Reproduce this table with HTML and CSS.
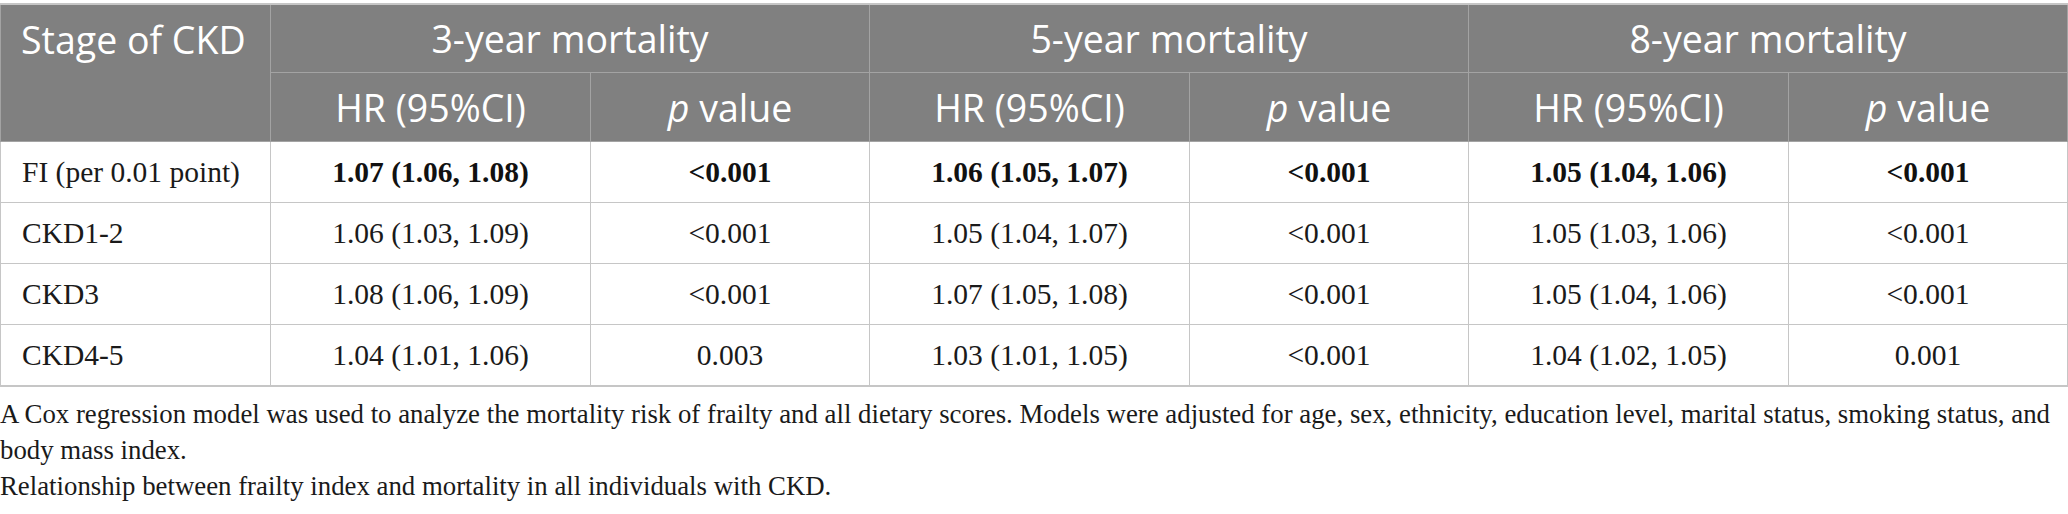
FILE: index.html
```html
<!DOCTYPE html>
<html lang="en">
<head>
<meta charset="utf-8">
<title>Frailty index and mortality in CKD</title>
<link rel="stylesheet" href="styles.css">
</head>
<body>
<div class="page">
  <table class="data">
    <colgroup>
      <col class="c-stage">
      <col class="c-hr"><col class="c-p">
      <col class="c-hr"><col class="c-p">
      <col class="c-hr"><col class="c-p">
    </colgroup>
    <thead>
      <tr class="h1">
        <th rowspan="2" class="stage">Stage of CKD</th>
        <th colspan="2">3-year mortality</th>
        <th colspan="2">5-year mortality</th>
        <th colspan="2">8-year mortality</th>
      </tr>
      <tr class="h2">
        <th>HR (95%CI)</th><th><i>p</i> value</th>
        <th>HR (95%CI)</th><th><i>p</i> value</th>
        <th>HR (95%CI)</th><th><i>p</i> value</th>
      </tr>
    </thead>
    <tbody>
      <tr>
        <td class="label">FI (per 0.01 point)</td>
        <td><b>1.07 (1.06, 1.08)</b></td><td><b>&lt;0.001</b></td>
        <td><b>1.06 (1.05, 1.07)</b></td><td><b>&lt;0.001</b></td>
        <td><b>1.05 (1.04, 1.06)</b></td><td><b>&lt;0.001</b></td>
      </tr>
      <tr>
        <td class="label">CKD1-2</td>
        <td>1.06 (1.03, 1.09)</td><td>&lt;0.001</td>
        <td>1.05 (1.04, 1.07)</td><td>&lt;0.001</td>
        <td>1.05 (1.03, 1.06)</td><td>&lt;0.001</td>
      </tr>
      <tr>
        <td class="label">CKD3</td>
        <td>1.08 (1.06, 1.09)</td><td>&lt;0.001</td>
        <td>1.07 (1.05, 1.08)</td><td>&lt;0.001</td>
        <td>1.05 (1.04, 1.06)</td><td>&lt;0.001</td>
      </tr>
      <tr>
        <td class="label">CKD4-5</td>
        <td>1.04 (1.01, 1.06)</td><td>0.003</td>
        <td>1.03 (1.01, 1.05)</td><td>&lt;0.001</td>
        <td>1.04 (1.02, 1.05)</td><td>0.001</td>
      </tr>
    </tbody>
  </table>
  <div class="notes">
    <p>A Cox regression model was used to analyze the mortality risk of frailty and all dietary scores. Models were adjusted for age, sex, ethnicity, education level, marital status, smoking status, and body mass index.</p>
    <p>Relationship between frailty index and mortality in all individuals with CKD.</p>
  </div>
</div>
</body>
</html>
```

FILE: styles.css
```css
html, body {
  margin: 0;
  padding: 0;
  background: #ffffff;
}

.page {
  width: 2068px;
  padding-top: 3px;
}

.data {
  width: 2068px;
  border-collapse: collapse;
  table-layout: fixed;
  border-top: 2px solid #c6c6c6;
  border-bottom: 2px solid #c6c6c6;
}

.c-stage { width: 270px; }
.c-hr { width: 320px; }
.c-p { width: 279px; }

.data th {
  background: #808080;
  color: #ffffff;
  font-family: "Open Sans", "Noto Sans", sans-serif;
  font-weight: 400;
  font-size: 37.5px;
  text-align: center;
  vertical-align: middle;
  padding: 0 10px;
  border: 1px solid #a3a3a3;
  white-space: nowrap;
}

.data .h1 th { height: 67px; }
.data .h2 th { height: 68px; }

.data th.stage {
  text-align: left;
  vertical-align: top;
  padding: 9px 20px 0;
}

.data td {
  font-family: "Liberation Serif", "Times New Roman", serif;
  font-size: 29.5px;
  color: #1a1a1a;
  text-align: center;
  vertical-align: middle;
  height: 60px;
  padding: 0 10px;
  border: 1px solid #c6c6c6;
  white-space: nowrap;
}

.data td.label {
  text-align: left;
  padding-left: 21px;
}

.data b { font-weight: 700; color: #111111; }

.notes {
  padding-top: 9px;
  font-family: "Liberation Serif", "Times New Roman", serif;
  font-size: 26.8px;
  line-height: 36px;
  color: #1a1a1a;
}

.notes p { margin: 0; }
```
